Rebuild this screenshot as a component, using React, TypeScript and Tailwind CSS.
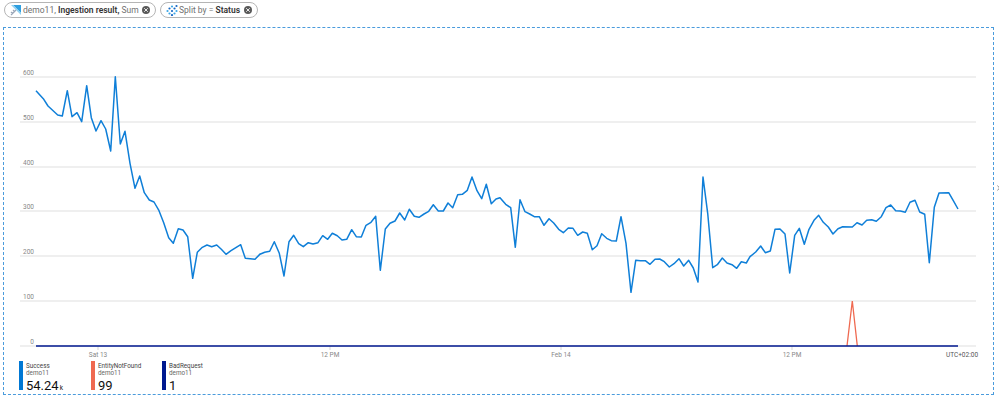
import { X } from 'lucide-react';

// points read off the screenshot in chunks, [originX, originY, ...x,y at 3x]
const chunks: [number, number, number[]][] = [
  [20, 70, [48,62,70,86,84,108,113,135,127,138,142,62,156,140,171,128,185,155,200,47,214,143,228,183,243,152,257,177,272,243,286,20,301,222,315,184,330,280,345,355,359,318,373,368,388,390,402,396,417,422,431,458,446,503,460,520,475,476,489,480,503,500,518,625,532,547,547,532,561,525,575,530,590,525,604,538,618,553,633,542,662,524,676,565,705,568,720,552]],
  [250, 150, [15,328,30,313,44,307,59,304,73,275,88,310,102,378,117,275,131,256,146,281,160,290,175,278,189,282,204,278,218,257,233,268,247,250,262,257,276,270,290,268,305,239,319,260,334,261,348,226,363,217,377,199,391,361,406,237,420,220,435,213,449,189,464,210,478,178,493,199,507,202,522,192,536,184,550,164,565,183,580,183,594,159,608,173,623,134,637,133,652,121,666,81,681,122,695,146,709,103,724,161,738,147]],
  [500, 150, [0,143,17,163,32,173,46,292,60,149,75,185,89,192,103,200,118,200,132,226,147,206,161,219,176,238,190,248,205,234,219,235,233,256,248,246,262,250,277,299,291,287,305,251,320,265,334,272,349,273,363,200,378,280,393,427,407,331,421,332,436,332,450,343,465,328,479,327,493,335,508,351,522,341,537,326,551,348,566,331,580,354,594,396,609,81,623,190,638,353,652,344,667,324,681,339,696,344,710,355,724,335,739,339]],
  [750, 150, [0,320,17,306,32,288,46,308,61,303,75,238,90,237,105,252,119,369,134,256,148,235,163,283,177,238,192,211,206,196,220,217,235,231,249,252,264,236,278,230,307,231,321,218,336,225,350,211,365,209,379,214,394,200,408,173,422,165,437,182,451,183,466,187,480,157,495,151,509,186,524,193,538,338,553,172,567,129,596,128,610,152,624,177]],
];

const successLine = chunks
  .flatMap(([ox, oy, pts]) =>
    pts.flatMap((v, i) => (i % 2 ? [] : [`${(ox + v / 3).toFixed(1)},${(oy + pts[i + 1] / 3).toFixed(1)}`]))
  )
  .join(' ');

const yTicks = [
  { label: '600', y: 77 },
  { label: '500', y: 122 },
  { label: '400', y: 167 },
  { label: '300', y: 211 },
  { label: '200', y: 256 },
  { label: '100', y: 301 },
  { label: '0', y: 346 },
];

const xTicks = [
  { label: 'Sat 13', x: 98 },
  { label: '12 PM', x: 330 },
  { label: 'Feb 14', x: 561 },
  { label: '12 PM', x: 792 },
];

const legend = [
  { name: 'Success', color: 'bg-[#0078d4]', value: '54.24', unit: 'k', width: 'w-[72px]' },
  { name: 'EntityNotFound', color: 'bg-[#ef6950]', value: '99', unit: '', width: 'w-[71px]' },
  { name: 'BadRequest', color: 'bg-[#00188f]', value: '1', unit: '', width: 'w-[72px]' },
];

function MetricIcon() {
  return (
    <svg width="12" height="12" viewBox="0 0 12 12" className="shrink-0">
      <path d="M3 1h8v8z" fill="#2f9fe0" />
      <path d="M3 1l8 8v2L1 1z" fill="#8fd0f0" />
      <path d="M1 11l5-5M1 8l2 2M3 6l2 2" stroke="#9aa6b8" strokeWidth="1.2" fill="none" />
    </svg>
  );
}

function SplitIcon() {
  const dots = [
    [1.5, 7], [3.5, 4.5], [3.5, 9.5], [6, 7], [6, 2.5], [8.5, 4.5], [8.5, 9.5], [10.5, 2], [10.5, 7], [6, 11],
  ];
  return (
    <svg width="12" height="12" viewBox="0 0 12 12" className="shrink-0">
      {dots.map(([cx, cy], i) => (
        <circle key={i} cx={cx} cy={cy} r="1.1" fill={i % 2 ? '#1668c4' : '#3ba6e6'} />
      ))}
    </svg>
  );
}

function Pill({ icon, width, children }: { icon: React.ReactNode; width: string; children: React.ReactNode }) {
  return (
    <div className={`${width} h-[16px] flex items-center pl-[5px] pr-[5px] gap-[1px] rounded-full border border-[#b5b5b5] bg-white`}>
      {icon}
      <span className="flex-1 whitespace-nowrap text-[#707070] text-[8.5px] leading-none">{children}</span>
      <span className="w-[8px] h-[8px] rounded-full bg-[#5a5a5a] flex items-center justify-center">
        <X size={6} color="white" strokeWidth={3.5} />
      </span>
    </div>
  );
}

export default function App() {
  return (
    <div className="relative w-[999px] h-[401px] overflow-hidden bg-white font-['Roboto',sans-serif]">
      <div className="flex gap-[4px] pl-[4px] pt-[2px]">
        <Pill icon={<MetricIcon />} width="w-[152px]">
          demo11, <span className="font-semibold text-[#333]">Ingestion result,</span> Sum
        </Pill>
        <Pill icon={<SplitIcon />} width="w-[98px]">
          Split by = <span className="font-semibold text-[#333]">Status</span>
        </Pill>
      </div>

      <div className="mt-[9px] ml-[3px] w-[991px] h-[368px] border border-dashed border-[#4a9bdc]">
        <svg width="989" height="330" viewBox="4 28 989 330" className="block">
          {yTicks.map((t) => (
            <g key={t.label}>
              <line x1="20" x2="976" y1={t.y} y2={t.y} stroke="#e0e0e0" strokeWidth="1.2" />
              <text x="34" y={t.y - 2} textAnchor="end" fontSize="6.5" fill="#888">{t.label}</text>
            </g>
          ))}
          {xTicks.map((t, i) => (
            <g key={i}>
              <line x1={t.x} x2={t.x} y1="346" y2="350" stroke="#d5d5d5" />
              <text x={t.x} y="357" textAnchor="middle" fontSize="6.5" fill="#888">{t.label}</text>
            </g>
          ))}
          <text x="962" y="357" textAnchor="middle" fontSize="6.5" fill="#555">UTC+02:00</text>

          <polyline points={successLine} fill="none" stroke="#0f7fd8" strokeWidth="1.5" strokeLinejoin="round" />
          <polyline points="847,346 852.3,301 857.3,346" fill="none" stroke="#ef6950" strokeWidth="1.3" />
          <line x1="36" x2="958" y1="346" y2="346" stroke="#00188f" strokeWidth="1.6" />
        </svg>

        <div className="flex pl-[15px] pt-[3px]">
          {legend.map((item) => (
            <div key={item.name} className={`${item.width} h-[30px] flex gap-[3px]`}>
              <div className={`w-[4px] h-[29px] ${item.color}`} />
              <div className="flex flex-col text-[#444] text-[6.3px] leading-[7px] pt-[2px]">
                <span>{item.name}</span>
                <span className="text-[#666]">demo11</span>
                <span className="mt-[2px] text-[#111] text-[13px] leading-[14px]">
                  {item.value}
                  {item.unit && <span className="ml-[1px] text-[6.5px]">{item.unit}</span>}
                </span>
              </div>
            </div>
          ))}
        </div>
      </div>

      <svg width="3" height="6" viewBox="0 0 3 6" className="absolute left-[997px] top-[185px]">
        <path d="M0.5 0.5L2.5 3L0.5 5.5" fill="none" stroke="#777" strokeWidth="0.8" />
      </svg>
    </div>
  );
}
